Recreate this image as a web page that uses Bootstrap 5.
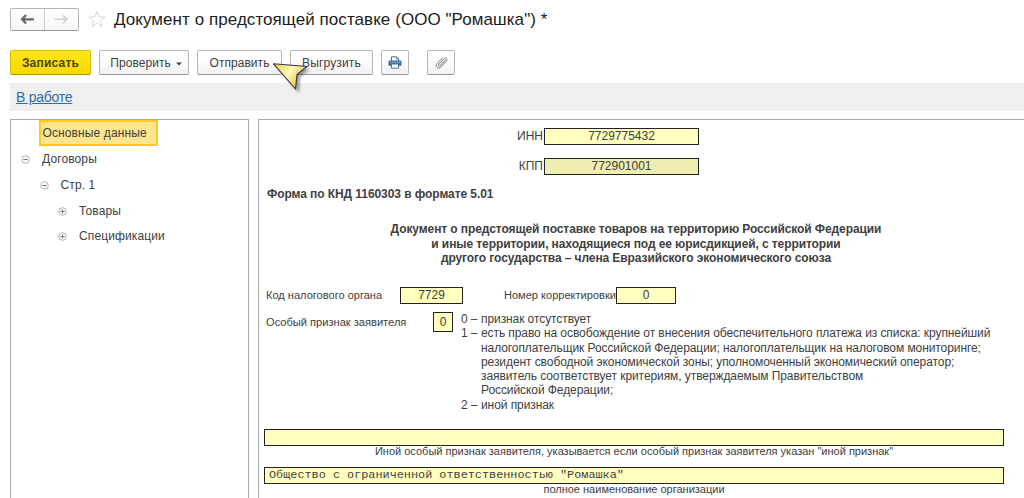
<!DOCTYPE html>
<html lang="ru">
<head>
<meta charset="utf-8">
<meta name="viewport" content="width=device-width, initial-scale=1">
<title>Документ о предстоящей поставке</title>
<link href="https://cdn.jsdelivr.net/npm/bootstrap@5.3.0/dist/css/bootstrap.min.css" rel="stylesheet">
<style>
body{font-family:"Liberation Sans",Arial,sans-serif;font-size:12px;line-height:14.25px;color:#404040;background:#fff;height:100vh;overflow:hidden}
.page-head{height:39px;padding:8px 0 0 10px}
.nav-pair{width:69px;height:23px;border:1px solid #b5b5b5;border-bottom-color:#9d9d9d;border-radius:2px;background:linear-gradient(#fff,#f5f5f5)}
.nav-pair span+span{border-left:1px solid #c8c8c8}
.doc-title{font-size:17px;line-height:23px;color:#1c1c1c;margin:0 0 0 7px;font-weight:400;letter-spacing:.06px}
.toolbar{height:44px;padding:11px 0 0 10px}
.tool{--bs-btn-padding-x:0;--bs-btn-padding-y:0;--bs-btn-font-size:12px;--bs-btn-line-height:14px;--bs-btn-border-radius:2px;--bs-btn-color:#404040;--bs-btn-border-color:#b7b7b7;height:25px;background:linear-gradient(#fff 30%,#f1f1f1);border-bottom-color:#949494;display:flex;align-items:center;justify-content:center;letter-spacing:.05px}
.tool-main{--bs-btn-color:#4d4520;--bs-btn-border-color:#d4bb08;background:linear-gradient(#ffe71a,#f7d900);border-bottom-color:#a99300;font-weight:700;letter-spacing:.2px}
.w-save{width:81px}.w-check{width:90px;padding-left:4px}.w-send{width:85px}.w-export{width:83px;letter-spacing:.15px}.w-icon{width:28px}.w-clip{margin-left:10px}
.pointer{position:absolute;left:74px;top:12px;z-index:3}
.status{height:28px;margin-left:10px;background:#efefef;padding:6px 0 0 6px;line-height:16px}
.status a{font-size:14px;color:#2e6cb0;text-decoration:underline;letter-spacing:-.25px}
.panes{height:379px;margin:8px 0 0 10px;gap:9px}
.tree{width:239px;border:1px solid #a9a9a9;border-bottom:0;letter-spacing:.12px}
.tree-row{height:25.75px;line-height:25px;gap:12px}
.tree-sel{width:119px;height:26px;margin:0 0 .7px 28px;border:2px solid #fbc91f;background:#ffe58d;padding-left:1.5px;line-height:23px}
.sheet{border:1px solid #a9a9a9;border-right:0;border-bottom:0;min-width:0}
.cell{border:1px solid #222;background:#ffffc0;height:17px;line-height:15px;text-align:center}
.cell-dim{background:#eeeeb0}
.id-row{padding-left:257px;height:17px;line-height:16px}
.id-row span{width:28px;text-align:right;padding-right:1px}
.id-row .cell{width:155px}
.knd{margin:12px 0 0 8px;letter-spacing:-.07px}
.doc-head{margin:21px 0 0;width:754px;text-align:center;letter-spacing:-.09px}
.code-row{margin:22px 0 0 7px;height:17px;line-height:16px;font-size:11.05px}
.code-row .cell{font-size:12px}
.sign-row{margin:8px 0 0 7px}
.sign-lbl{width:167px;font-size:11.1px;line-height:20px}
.sign-box{width:20px;height:20px;line-height:18px}
.legend{margin-left:8px;letter-spacing:-.08px}
.legend dt{width:20px;font-weight:400;white-space:nowrap}
.legend dd{margin:0}
.wide{width:740px;margin-left:5px}
.note{width:740px;margin-left:5px;text-align:center;font-size:11px;line-height:11px}
.mono{font-family:"Liberation Mono","Courier New",monospace;font-size:11.83px;text-align:left;padding-left:4px}
</style>
</head>
<body>
<header class="page-head d-flex">
  <div class="nav-pair d-flex">
    <span class="flex-fill d-flex align-items-center justify-content-center"><svg width="15" height="11" viewBox="0 0 15 11"><path d="M6 1 2 5.300 6 9.600M2.400 5.300H14" fill="none" stroke="#666" stroke-width="2.200"/></svg></span>
    <span class="flex-fill d-flex align-items-center justify-content-center"><svg width="15" height="11" viewBox="0 0 15 11"><path d="M9 1.400 13 5.300 9 9.200M1 5.300H12.600" fill="none" stroke="#cfcfcf" stroke-width="1.600"/></svg></span>
  </div>
  <svg class="ms-2 flex-shrink-0" width="20" height="22" viewBox="0 0 20 22"><path d="M10 3.300 12.200 9H18L13.400 12.700 15 18.600 10 15.200 5 18.600 6.600 12.700 2 9H7.800Z" fill="#fff" stroke="#d5d5d5"/></svg>
  <h1 class="doc-title text-nowrap">Документ о предстоящей поставке (ООО "Ромашка") *</h1>
</header>
<div class="toolbar d-flex gap-2">
  <button class="btn tool tool-main w-save">Записать</button>
  <button class="btn tool w-check">Проверить<svg style="margin:2px 0 0 5px" width="6" height="4" viewBox="0 0 6 4"><path d="M0 .5H6L3 3.500Z" fill="#444"/></svg></button>
  <div class="position-relative">
    <button class="btn tool w-send">Отправить</button>
    <svg class="pointer" width="42" height="38" viewBox="0 0 42 38">
      <defs><linearGradient id="gold" x1="0" y1="0" x2="1" y2=".6"><stop offset="0" stop-color="#f3cf35"/><stop offset=".5" stop-color="#fff8b8"/><stop offset="1" stop-color="#efb915"/></linearGradient>
      <filter id="soft" x="-30%" y="-30%" width="160%" height="160%"><feGaussianBlur stdDeviation="1.500"/></filter></defs>
      <path d="M6 5 39 7 29 15 28 31Z" fill="#555" opacity=".6" filter="url(#soft)"/>
      <path d="M2.500 1.800 36 4.500 26 12.500 24.500 27Z" fill="url(#gold)" stroke="#30345c" stroke-width="1.100" stroke-linejoin="round"/>
    </svg>
  </div>
  <button class="btn tool w-export">Выгрузить</button>
  <button class="btn tool w-icon" aria-label="Печать"><svg width="14" height="13" viewBox="0 0 14 13"><path d="M3.500 5V.8H8.500L10.500 2.800V5" fill="#fff" stroke="#476f96"/><path d="M8.300.8V3H10.500" fill="none" stroke="#476f96" stroke-width=".8"/><rect x=".5" y="4.500" width="13" height="5.500" rx="1.300" fill="#3d6e9e"/><path d="M2 6.300H12" stroke="#7ea4c6"/><path d="M3.500 8H10.500V12.200H3.500Z" fill="#fff" stroke="#476f96"/></svg></button>
  <button class="btn tool w-icon w-clip" aria-label="Файлы"><svg width="13" height="13" viewBox="0 0 13 13"><path d="M10.500 4 5.500 9.300C4.300 10.500 2.800 9.200 4 8L8.800 3C10.600 1.100 13 3.200 11.300 5.200L5.800 11C3.200 13.500-.5 10.300 2 7.500L7.500 1.800" fill="none" stroke="#777" stroke-width="1" stroke-linecap="round"/></svg></button>
</div>
<div class="status"><a href="#">В работе</a></div>
<main class="panes d-flex">
  <nav class="tree flex-shrink-0">
    <div class="tree-sel">Основные данные</div>
    <div class="tree-row d-flex align-items-center" style="padding-left:10px"><svg width="9" height="9" viewBox="0 0 9 9"><circle cx="4.500" cy="4.500" r="3.800" fill="#fff" stroke="#b0b0b0"/><path d="M2.300 4.500H6.700" stroke="#777"/></svg><span>Договоры</span></div>
    <div class="tree-row d-flex align-items-center" style="padding-left:28.5px"><svg width="9" height="9" viewBox="0 0 9 9"><circle cx="4.500" cy="4.500" r="3.800" fill="#fff" stroke="#b0b0b0"/><path d="M2.300 4.500H6.700" stroke="#777"/></svg><span>Стр. 1</span></div>
    <div class="tree-row d-flex align-items-center" style="padding-left:47px"><svg width="9" height="9" viewBox="0 0 9 9"><circle cx="4.500" cy="4.500" r="3.800" fill="#fff" stroke="#b0b0b0"/><path d="M2.300 4.500H6.700M4.500 2.300V6.700" stroke="#777"/></svg><span>Товары</span></div>
    <div class="tree-row d-flex align-items-center" style="padding-left:47px"><svg width="9" height="9" viewBox="0 0 9 9"><circle cx="4.500" cy="4.500" r="3.800" fill="#fff" stroke="#b0b0b0"/><path d="M2.300 4.500H6.700M4.500 2.300V6.700" stroke="#777"/></svg><span>Спецификации</span></div>
  </nav>
  <section class="sheet flex-fill">
    <div class="id-row d-flex mt-2"><span>ИНН</span><div class="cell">7729775432</div></div>
    <div class="id-row d-flex" style="margin-top:13px"><span>КПП</span><div class="cell cell-dim">772901001</div></div>
    <div class="knd fw-bold">Форма по КНД 1160303 в формате 5.01</div>
    <div class="doc-head fw-bold">Документ о предстоящей поставке товаров на территорию Российской Федерации<br>и иные территории, находящиеся под ее юрисдикцией, с территории<br>другого государства – члена Евразийского экономического союза</div>
    <div class="code-row d-flex text-nowrap"><span style="width:134px">Код налогового органа</span><div class="cell" style="width:63px">7729</div><span style="width:153px;padding-left:41px">Номер корректировки</span><div class="cell" style="width:60px">0</div></div>
    <div class="sign-row d-flex text-nowrap">
      <span class="sign-lbl">Особый признак заявителя</span><div class="cell sign-box">0</div>
      <dl class="legend mb-0">
        <div class="d-flex"><dt>0 –</dt><dd>признак отсутствует</dd></div>
        <div class="d-flex"><dt>1 –</dt><dd>есть право на освобождение от внесения обеспечительного платежа из списка: крупнейший<br>налогоплательщик Российской Федерации; налогоплательщик на налоговом мониторинге;<br>резидент свободной экономической зоны; уполномоченный экономический оператор;<br>заявитель соответствует критериям, утверждаемым Правительством<br>Российской Федерации;</dd></div>
        <div class="d-flex"><dt>2 –</dt><dd>иной признак</dd></div>
      </dl>
    </div>
    <div class="cell wide" style="margin-top:17px"></div>
    <div class="note">Иной особый признак заявителя, указывается если особый признак заявителя указан "иной признак"</div>
    <div class="cell wide mono" style="margin-top:10px">Общество с ограниченной ответственностью "Ромашка"</div>
    <div class="note">полное наименование организации</div>
  </section>
</main>
<script src="https://cdn.jsdelivr.net/npm/bootstrap@5.3.0/dist/js/bootstrap.bundle.min.js"></script>
</body>
</html>
